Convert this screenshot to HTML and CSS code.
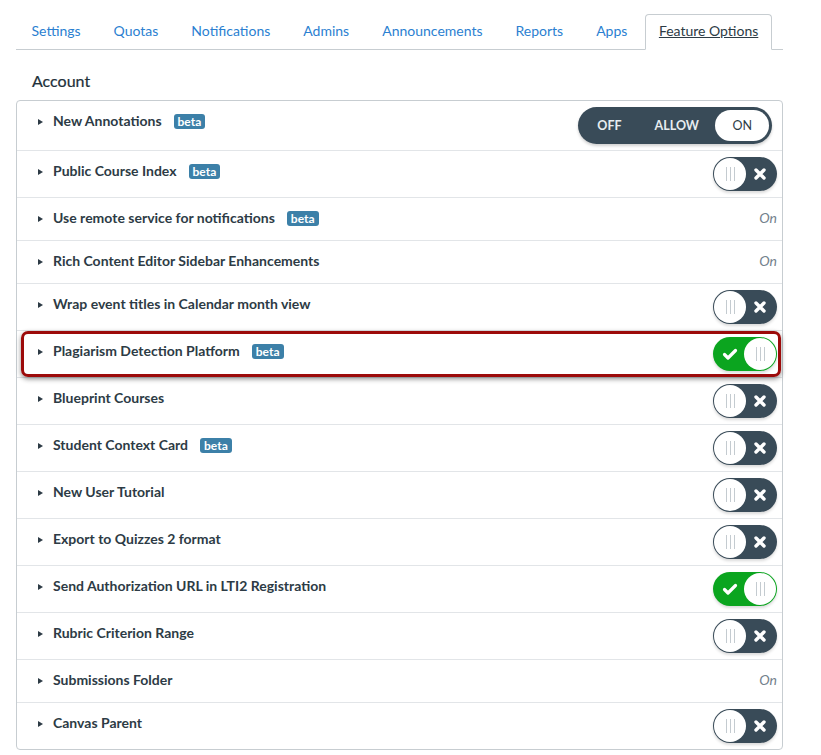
FILE: index.html
```html
<!DOCTYPE html>
<html>
<head>
<meta charset="utf-8">
<link rel="stylesheet" href="styles.css">
</head>
<body>
<div class="page">
  <ul class="tabs">
    <li><a class="tab">Settings</a></li>
    <li><a class="tab">Quotas</a></li>
    <li><a class="tab">Notifications</a></li>
    <li><a class="tab">Admins</a></li>
    <li><a class="tab">Announcements</a></li>
    <li><a class="tab">Reports</a></li>
    <li><a class="tab">Apps</a></li>
    <li><a class="tab active">Feature Options</a></li>
  </ul>
  <h3 class="heading">Account</h3>
  <div class="features">
    <div class="row">
      <div class="label"><span class="caret"></span><span class="name">New Annotations</span><span class="beta">beta</span></div>
      <div class="tri">
        <span class="tri-opt">OFF</span>
        <span class="tri-opt">ALLOW</span>
        <span class="tri-opt tri-on">ON</span>
      </div>
    </div>
    <div class="row">
      <div class="label"><span class="caret"></span><span class="name">Public Course Index</span><span class="beta">beta</span></div>
      <div class="toggle off"><span class="knob"><i></i><i></i><i></i></span><svg class="icon-x" width="14" height="14" viewBox="0 0 14 14"><path d="M3 3 L11 11 M11 3 L3 11" stroke="#fff" stroke-width="3.4" stroke-linecap="round"/></svg></div>
    </div>
    <div class="row">
      <div class="label"><span class="caret"></span><span class="name">Use remote service for notifications</span><span class="beta">beta</span></div>
      <div class="state">On</div>
    </div>
    <div class="row">
      <div class="label"><span class="caret"></span><span class="name">Rich Content Editor Sidebar Enhancements</span></div>
      <div class="state">On</div>
    </div>
    <div class="row">
      <div class="label"><span class="caret"></span><span class="name">Wrap event titles in Calendar month view</span></div>
      <div class="toggle off"><span class="knob"><i></i><i></i><i></i></span><svg class="icon-x" width="14" height="14" viewBox="0 0 14 14"><path d="M3 3 L11 11 M11 3 L3 11" stroke="#fff" stroke-width="3.4" stroke-linecap="round"/></svg></div>
    </div>
    <div class="row highlighted">
      <div class="label"><span class="caret"></span><span class="name">Plagiarism Detection Platform</span><span class="beta">beta</span></div>
      <div class="toggle on"><svg class="icon-check" width="16" height="14" viewBox="0 0 16 14"><path d="M2.5 7.5 L6 11 L13.5 3.5" fill="none" stroke="#fff" stroke-width="3.2" stroke-linecap="round" stroke-linejoin="round"/></svg><span class="knob"><i></i><i></i><i></i></span></div>
      <div class="callout"></div>
    </div>
    <div class="row">
      <div class="label"><span class="caret"></span><span class="name">Blueprint Courses</span></div>
      <div class="toggle off"><span class="knob"><i></i><i></i><i></i></span><svg class="icon-x" width="14" height="14" viewBox="0 0 14 14"><path d="M3 3 L11 11 M11 3 L3 11" stroke="#fff" stroke-width="3.4" stroke-linecap="round"/></svg></div>
    </div>
    <div class="row">
      <div class="label"><span class="caret"></span><span class="name">Student Context Card</span><span class="beta">beta</span></div>
      <div class="toggle off"><span class="knob"><i></i><i></i><i></i></span><svg class="icon-x" width="14" height="14" viewBox="0 0 14 14"><path d="M3 3 L11 11 M11 3 L3 11" stroke="#fff" stroke-width="3.4" stroke-linecap="round"/></svg></div>
    </div>
    <div class="row">
      <div class="label"><span class="caret"></span><span class="name">New User Tutorial</span></div>
      <div class="toggle off"><span class="knob"><i></i><i></i><i></i></span><svg class="icon-x" width="14" height="14" viewBox="0 0 14 14"><path d="M3 3 L11 11 M11 3 L3 11" stroke="#fff" stroke-width="3.4" stroke-linecap="round"/></svg></div>
    </div>
    <div class="row">
      <div class="label"><span class="caret"></span><span class="name">Export to Quizzes 2 format</span></div>
      <div class="toggle off"><span class="knob"><i></i><i></i><i></i></span><svg class="icon-x" width="14" height="14" viewBox="0 0 14 14"><path d="M3 3 L11 11 M11 3 L3 11" stroke="#fff" stroke-width="3.4" stroke-linecap="round"/></svg></div>
    </div>
    <div class="row">
      <div class="label"><span class="caret"></span><span class="name">Send Authorization URL in LTI2 Registration</span></div>
      <div class="toggle on"><svg class="icon-check" width="16" height="14" viewBox="0 0 16 14"><path d="M2.5 7.5 L6 11 L13.5 3.5" fill="none" stroke="#fff" stroke-width="3.2" stroke-linecap="round" stroke-linejoin="round"/></svg><span class="knob"><i></i><i></i><i></i></span></div>
    </div>
    <div class="row">
      <div class="label"><span class="caret"></span><span class="name">Rubric Criterion Range</span></div>
      <div class="toggle off"><span class="knob"><i></i><i></i><i></i></span><svg class="icon-x" width="14" height="14" viewBox="0 0 14 14"><path d="M3 3 L11 11 M11 3 L3 11" stroke="#fff" stroke-width="3.4" stroke-linecap="round"/></svg></div>
    </div>
    <div class="row">
      <div class="label"><span class="caret"></span><span class="name">Submissions Folder</span></div>
      <div class="state">On</div>
    </div>
    <div class="row">
      <div class="label"><span class="caret"></span><span class="name">Canvas Parent</span></div>
      <div class="toggle off"><span class="knob"><i></i><i></i><i></i></span><svg class="icon-x" width="14" height="14" viewBox="0 0 14 14"><path d="M3 3 L11 11 M11 3 L3 11" stroke="#fff" stroke-width="3.4" stroke-linecap="round"/></svg></div>
    </div>
  </div>
</div>
</body>
</html>
```
FILE: styles.css
```css
* { box-sizing: border-box; }
html, body { margin: 0; padding: 0; background: #fff; }
body { font-family: Lato, "Open Sans", "Liberation Sans", sans-serif; color: #2d3b45; }
.page { width: 767px; margin-left: 16px; padding-top: 14px; }

.tabs { list-style: none; margin: 0; padding: 0; display: flex; border-bottom: 1px solid #c7cdd1; height: 36px; }
.tabs li { margin: 0; }
.tab { display: block; height: 36px; padding: 0 16.5px 0 14.5px; line-height: 31px; font-size: 14px; white-space: nowrap; color: #2b7fd1; border: 1px solid transparent; border-radius: 4px 4px 0 0; }
.tab.active { color: #2d3b45; text-decoration: underline; border-color: #c7cdd1; border-bottom-color: #fff; background: #fff; padding: 0 13px; }

.heading { margin: 21px 0 9px 16px; font-size: 16px; line-height: 20px; font-weight: 400; color: #22303a; -webkit-text-stroke: 0.2px #22303a; }

.features { border: 1px solid #c7cdd1; border-radius: 4px; }
.row { position: relative; display: flex; align-items: flex-start; padding: 6px 5px 6px 21px; border-bottom: 1px solid #e2e5e8; }
.row:last-child { border-bottom: 0; }
.label { display: flex; align-items: center; height: 30px; }
.caret { width: 0; height: 0; border-left: 5px solid #2d3b45; border-top: 3.5px solid transparent; border-bottom: 3.5px solid transparent; margin-right: 10px; margin-top: 0; }
.name { font-size: 14px; font-weight: 700; color: #2d3b45; margin-top: -3px; }
.beta { display: inline-block; margin-left: 12px; margin-top: -1px; background: #3c80a8; color: #fff; font-size: 12px; font-weight: 700; line-height: 15px; height: 15px; padding: 0 4px; border-radius: 3px; }

.state { margin-left: auto; height: 30px; line-height: 28px; font-style: italic; font-size: 14px; color: #73818c; padding-right: 0; }

.tri { margin-left: auto; margin-right: 5px; display: flex; align-items: center; height: 37px; padding: 3px; background: #394b58; border-radius: 19px; box-shadow: 0 2px 3px rgba(0,0,0,0.18); }
.tri-opt { padding: 0 16.5px; font-size: 12.5px; font-weight: 700; color: #e8edf0; line-height: 31px; height: 31px; }
.tri-on { background: #fff; color: #2d3b45; border-radius: 16px; font-weight: 400; padding: 0 17px; }

.toggle { margin-left: auto; width: 64px; height: 34px; border-radius: 17px; display: flex; align-items: center; justify-content: space-between; padding: 0; box-shadow: 0 2px 3px rgba(0,0,0,0.15); }
.toggle.off { background: #394b58; padding-right: 10px; }
.toggle.on { background: #0ba51f; padding-left: 9px; }
.knob { width: 32px; height: 32px; margin: 0 1px; border-radius: 50%; background: #fff; display: flex; align-items: center; justify-content: center; gap: 3px; }
.knob i { display: block; width: 1px; height: 14px; background: #c4cbd0; }
.icon-x, .icon-check { display: block; }

.callout { position: absolute; left: 4px; right: 1px; top: 0; bottom: 0; border: 3px solid #9c0a0a; border-radius: 7px; box-shadow: 0 2px 5px rgba(0,0,0,0.45); pointer-events: none; }
```
